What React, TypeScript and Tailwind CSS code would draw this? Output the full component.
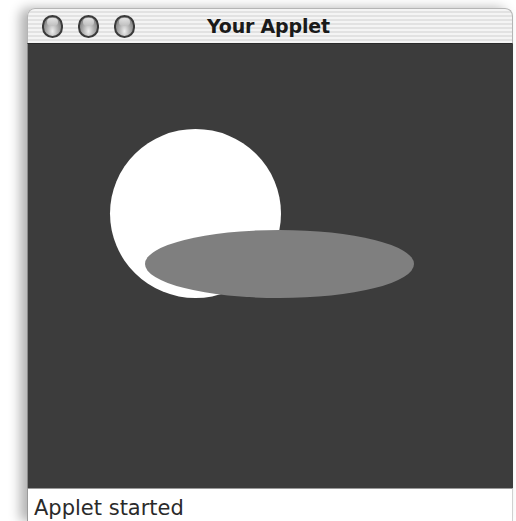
import React from "react";

// Classic Aqua title bar button: dark rim, glassy grey fill
function TitleButton(): React.ReactElement {
   return (
      <span className="relative inline-block h-[23px] w-[21px] rounded-full border-2 border-[#3a3a3a] bg-[radial-gradient(ellipse_at_50%_75%,#eeeeee_0%,#b0b0b0_45%,#686868_100%)]">
         <span className="absolute left-[3px] top-[1px] h-[8px] w-[11px] rounded-full bg-gradient-to-b from-[#fdfdfd] to-[#bdbdbd] opacity-75" />
      </span>
   );
}

function AppletCanvas(): React.ReactElement {
   return (
      <svg width="485" height="444" viewBox="0 0 485 444" className="block">
         <rect width="485" height="444" fill="#3c3c3c" />
         <ellipse cx="167.5" cy="169.5" rx="85.5" ry="84.5" fill="#ffffff" />
         <ellipse cx="251.5" cy="220" rx="134.5" ry="34" fill="#7f7f7f" />
      </svg>
   );
}

export default function App(): React.ReactElement {
   return (
      <div className="h-[521px] w-[516px] overflow-hidden bg-white pl-[27px] pt-[8px]">
         <div className="w-[486px] rounded-t-[8px] shadow-[-7px_0_12px_rgba(0,0,0,0.3)]">
            <div className="flex h-[35px] items-center rounded-t-[8px] border-x border-t border-[#b5b5b5] bg-[repeating-linear-gradient(180deg,#f4f4f4_0px,#f4f4f4_2px,#e2e2e2_2px,#e2e2e2_4px)] pl-[14px]">
               <div className="flex gap-[15px]">
                  <TitleButton />
                  <TitleButton />
                  <TitleButton />
               </div>
               <span className="ml-[72px] font-['DejaVu_Sans',sans-serif] text-[19px] font-bold tracking-[-0.2px] text-[#1a1a1a]">
                  Your Applet
               </span>
            </div>
            <div className="border-x border-t border-[#2a2a2a] border-x-[#8a8a8a]">
               <AppletCanvas />
            </div>
            <div className="h-[33px] border-x border-t border-[#9a9a9a] border-r-[#d0d0d0] bg-white pl-[6px] pt-[6px] font-['DejaVu_Sans',sans-serif] text-[21px] leading-[26px] text-[#2a2a2a]">
               Applet started
            </div>
         </div>
      </div>
   );
}
